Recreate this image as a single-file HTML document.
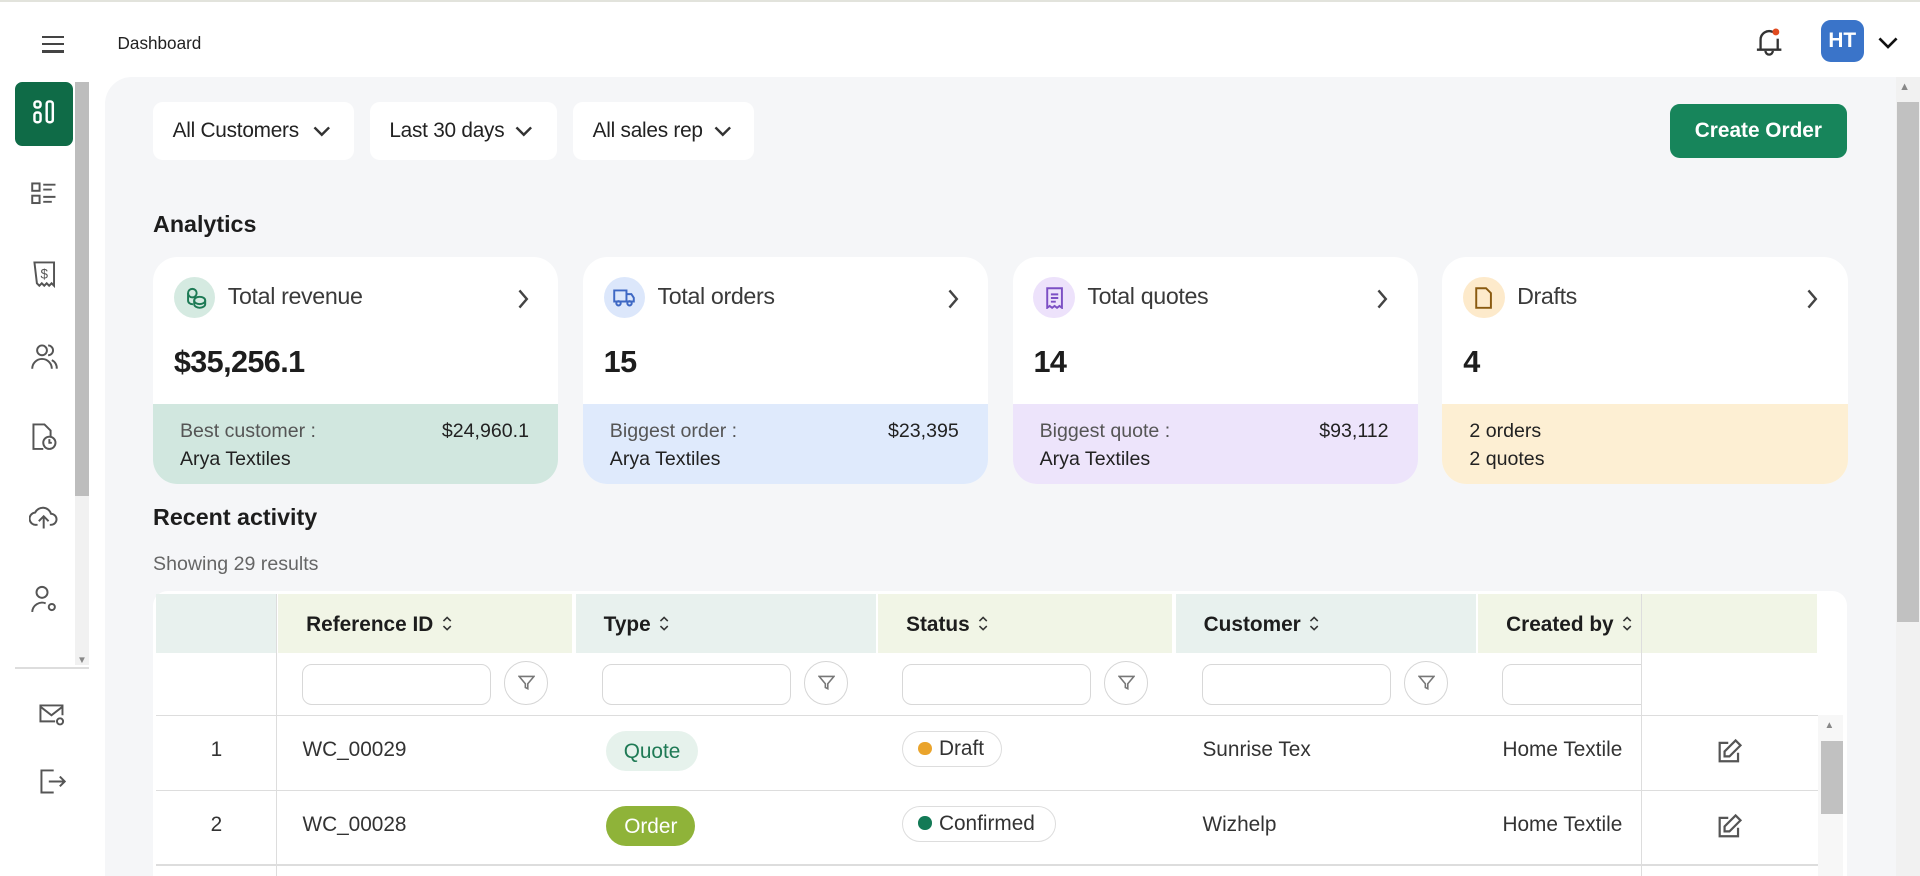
<!DOCTYPE html>
<html><head><meta charset="utf-8"><style>
html,body{margin:0;padding:0;}
body{width:1920px;height:876px;overflow:hidden;background:#fff;font-family:"Liberation Sans",sans-serif;color:#1d1d1d;}
#r{position:relative;width:1568px;height:715px;zoom:1.22449;overflow:hidden;background:#fff;}
.a{position:absolute;}
.t{position:absolute;white-space:nowrap;}
.filter{position:absolute;top:83px;height:48px;background:#fff;border-radius:8px;font-size:17px;line-height:48px;padding-left:16px;box-sizing:border-box;color:#222;letter-spacing:-0.2px}
.filter svg{position:absolute;top:19px;}
.card{position:absolute;top:210px;width:331px;height:185px;border-radius:20px;overflow:hidden;background:#fff;}
.card .bot{position:absolute;left:0;right:0;top:120px;bottom:0;}
.card .ic{position:absolute;left:17px;top:16px;width:34px;height:34px;border-radius:50%;}
.card .ti{position:absolute;left:61px;top:21px;font-size:19px;color:#3a3a3a;letter-spacing:-0.3px}
.card .val{position:absolute;left:17px;top:72px;font-size:25px;font-weight:bold;letter-spacing:-0.5px}
.card .chev{position:absolute;right:24px;top:25px;}
.card .l1{position:absolute;left:22px;top:133px;font-size:16px;color:#555;}
.card .l2{position:absolute;left:22px;top:156px;font-size:16px;color:#222;}
.card .r1{position:absolute;right:24px;top:133px;font-size:16px;color:#222;}
.hd{position:absolute;top:485px;height:48px;font-size:17px;font-weight:bold;line-height:50px;white-space:nowrap}
.hd svg{vertical-align:-1px;margin-left:6px}
.inp{position:absolute;top:542px;width:152px;height:32px;border:1px solid #d8d8d8;border-radius:8px;background:#fff;}
.fb{position:absolute;top:540px;width:34px;height:34px;border:1px solid #d5d5d5;border-radius:50%;background:#fff;}
.fb svg{position:absolute;left:10px;top:10px;}
.cell{position:absolute;font-size:17px;color:#333;}
</style></head><body><div id="r">
<div class="a" style="left:0;top:0;width:1568px;height:2px;background:#e2e3dc"></div>
<div class="a" style="left:34px;top:29px;width:18px;height:2px;background:#444"></div>
<div class="a" style="left:34px;top:35px;width:18px;height:2px;background:#444"></div>
<div class="a" style="left:34px;top:41px;width:18px;height:2px;background:#444"></div>
<div class="t" style="left:96px;top:27px;font-size:14px;color:#222">Dashboard</div>
<svg class="a" style="left:1431px;top:20px" width="28" height="28" viewBox="0 0 28 28" fill="none" stroke="#333" stroke-width="1.9"><path d="M7 20v-7a7 7 0 0 1 10-6.5"/><path d="M21 12v8"/><path d="M4 21h20"/><path d="M11 22a3 3 0 0 0 6 0"/><circle cx="19.5" cy="6.5" r="2.8" fill="#e04a1f" stroke="none"/></svg>
<div class="a" style="left:1487px;top:16px;width:35px;height:35px;border-radius:8px;background:#3a74c9;color:#fff;font-weight:bold;font-size:17px;line-height:35px;text-align:center">HT</div>
<svg class="a" style="left:1533px;top:29px" width="18" height="12" viewBox="0 0 18 12" fill="none" stroke="#111" stroke-width="2.2"><path d="M2 2l7 7 7-7"/></svg>
<div class="a" style="left:12px;top:67px;width:48px;height:52px;border-radius:6px;background:#0f6b47"></div>
<svg class="a" style="left:26px;top:81px" width="20" height="22" viewBox="0 0 20 22" fill="none" stroke="#fff" stroke-width="2"><rect x="2" y="2" width="5" height="5" rx="2"/><rect x="2" y="11" width="5" height="8" rx="2"/><rect x="12" y="2" width="5" height="17" rx="2"/></svg>
<div class="a" style="left:61px;top:67px;width:12px;height:338px;background:#bdbdbd"></div>
<div class="a" style="left:61px;top:405px;width:12px;height:138px;background:#f1f1f1"></div>
<svg class="a" style="left:25px;top:148px" width="22" height="20" viewBox="0 0 22 20" fill="none" stroke="#555" stroke-width="1.6"><rect x="1" y="2" width="6" height="6"/><rect x="1" y="12" width="6" height="6"/><path d="M10 3h10M10 7h7M10 13h10M10 17h7"/></svg>
<svg class="a" style="left:26px;top:212px" width="20" height="24" viewBox="0 0 20 24" fill="none" stroke="#555" stroke-width="1.6"><path d="M2 2h16v19l-2-2-2 2-2-2-2 2-2-2-2 2-2-2z"/><text x="10" y="15" font-size="11" text-anchor="middle" fill="#555" stroke="none" font-family="Liberation Sans">$</text></svg>
<svg class="a" style="left:25px;top:280px" width="22" height="22" viewBox="0 0 22 22" fill="none" stroke="#555" stroke-width="1.6"><circle cx="9" cy="6" r="4"/><path d="M1 21a8 8 0 0 1 16 0"/><path d="M14 2a4 4 0 0 1 0 8M17 14a7 7 0 0 1 4 7"/></svg>
<svg class="a" style="left:25px;top:345px" width="22" height="24" viewBox="0 0 22 24" fill="none" stroke="#555" stroke-width="1.6"><path d="M10 22H2V2h9l5 5v5"/><circle cx="15" cy="17" r="5"/><path d="M15 14v3h2"/></svg>
<svg class="a" style="left:24px;top:412px" width="24" height="22" viewBox="0 0 24 22" fill="none" stroke="#555" stroke-width="1.6"><path d="M7 17H6a5 5 0 0 1-1-10 7 7 0 0 1 13 1 4 4 0 0 1 0 9h-1"/><path d="M12 20v-9M8 14l4-4 4 4"/></svg>
<svg class="a" style="left:25px;top:478px" width="22" height="24" viewBox="0 0 22 24" fill="none" stroke="#555" stroke-width="1.6"><circle cx="9" cy="6" r="4.5"/><path d="M1 22a8 8 0 0 1 11-7"/><circle cx="17" cy="18" r="2.5"/></svg>
<div class="a" style="left:63px;top:535px;font-size:8px;color:#888">▼</div>
<div class="a" style="left:12px;top:545px;width:61px;height:1px;background:#ddd"></div>
<svg class="a" style="left:31px;top:574px" width="24" height="20" viewBox="0 0 24 20" fill="none" stroke="#555" stroke-width="1.6"><path d="M14 15H2V2h18v8"/><path d="M2 3l9 7 9-7"/><circle cx="18" cy="15" r="2.5"/></svg>
<svg class="a" style="left:32px;top:627px" width="22" height="22" viewBox="0 0 22 22" fill="none" stroke="#555" stroke-width="1.6"><path d="M12 2H2v18h10"/><path d="M8 11h13M17 7l4 4-4 4"/></svg>
<div class="a" style="left:86px;top:63px;width:1462px;height:652px;background:#f5f6f8;border-top-left-radius:22px"></div>
<div class="a" style="left:1548px;top:63px;width:20px;height:652px;background:#f1f1f1"></div>
<div class="a" style="left:1551px;top:66px;font-size:9px;color:#888">▲</div>
<div class="a" style="left:1549px;top:83px;width:18px;height:425px;background:#c1c1c1"></div>
<div class="filter" style="left:125px;width:164px">All Customers<svg style="left:130px" width="16" height="10" viewBox="0 0 16 10" fill="none" stroke="#333" stroke-width="2"><path d="M2 2l6 6 6-6"/></svg></div>
<div class="filter" style="left:302px;width:153px">Last 30 days<svg style="left:118px" width="16" height="10" viewBox="0 0 16 10" fill="none" stroke="#333" stroke-width="2"><path d="M2 2l6 6 6-6"/></svg></div>
<div class="filter" style="left:468px;width:148px">All sales rep<svg style="left:114px" width="16" height="10" viewBox="0 0 16 10" fill="none" stroke="#333" stroke-width="2"><path d="M2 2l6 6 6-6"/></svg></div>
<div class="a" style="left:1364px;top:85px;width:144px;height:44px;border-radius:8px;background:#17855b;color:#fff;font-weight:bold;font-size:17px;line-height:44px;text-align:center">Create Order</div>
<div class="t" style="left:125px;top:172px;font-size:19px;font-weight:bold">Analytics</div>
<div class="card" style="left:125px"><div class="bot" style="background:#d1e7df"></div><div class="ic" style="background:#d5eae1"></div>
<svg class="a" style="left:26px;top:24px" width="18" height="18" viewBox="0 0 18 18" fill="none" stroke="#1d7a55" stroke-width="1.6"><circle cx="6" cy="5" r="3.5"/><path d="M2.5 5v6a3.5 3 0 0 0 4 3"/><ellipse cx="12" cy="11" rx="4.5" ry="3"/><path d="M7.5 11v3a4.5 3 0 0 0 9 0v-3"/></svg>
<div class="ti">Total revenue</div><svg class="chev" width="10" height="18" viewBox="0 0 10 18" fill="none" stroke="#444" stroke-width="2"><path d="M2 2l6 7-6 7"/></svg>
<div class="val">$35,256.1</div><div class="l1">Best customer :</div><div class="r1">$24,960.1</div><div class="l2">Arya Textiles</div></div>
<div class="card" style="left:476px"><div class="bot" style="background:#dfeafc"></div><div class="ic" style="background:#dce7fb"></div>
<svg class="a" style="left:25px;top:25px" width="18" height="16" viewBox="0 0 18 16" fill="none" stroke="#3e68c4" stroke-width="1.6"><path d="M1 2h10v9H1zM11 5h4l2 3v3h-6"/><circle cx="4.5" cy="12.5" r="1.8"/><circle cx="13.5" cy="12.5" r="1.8"/></svg>
<div class="ti">Total orders</div><svg class="chev" width="10" height="18" viewBox="0 0 10 18" fill="none" stroke="#444" stroke-width="2"><path d="M2 2l6 7-6 7"/></svg>
<div class="val">15</div><div class="l1">Biggest order :</div><div class="r1">$23,395</div><div class="l2">Arya Textiles</div></div>
<div class="card" style="left:827px"><div class="bot" style="background:#ede4fb"></div><div class="ic" style="background:#ede2fb"></div>
<svg class="a" style="left:27px;top:24px" width="14" height="18" viewBox="0 0 14 18" fill="none" stroke="#7c4fc4" stroke-width="1.6"><path d="M1 1h12v16l-2-1.5-2 1.5-2-1.5-2 1.5-2-1.5-2 1.5z"/><path d="M4 6h6M4 9h6M4 12h4"/></svg>
<div class="ti">Total quotes</div><svg class="chev" width="10" height="18" viewBox="0 0 10 18" fill="none" stroke="#444" stroke-width="2"><path d="M2 2l6 7-6 7"/></svg>
<div class="val">14</div><div class="l1">Biggest quote :</div><div class="r1">$93,112</div><div class="l2">Arya Textiles</div></div>
<div class="card" style="left:1178px"><div class="bot" style="background:#fdefd3"></div><div class="ic" style="background:#fdeacb"></div>
<svg class="a" style="left:27px;top:24px" width="14" height="18" viewBox="0 0 14 18" fill="none" stroke="#8a5a10" stroke-width="1.6"><path d="M1 1h8l4 4v12H1z"/></svg>
<div class="ti">Drafts</div><svg class="chev" width="10" height="18" viewBox="0 0 10 18" fill="none" stroke="#444" stroke-width="2"><path d="M2 2l6 7-6 7"/></svg>
<div class="val">4</div><div class="l1" style="color:#222">2 orders</div><div class="l2">2 quotes</div></div>
<div class="t" style="left:125px;top:412px;font-size:19px;font-weight:bold">Recent activity</div>
<div class="t" style="left:125px;top:452px;font-size:16px;color:#666">Showing 29 results</div>
<div class="a" style="left:125px;top:483px;width:1383px;height:232px;background:#fff;border-radius:12px 12px 0 0"></div>
<div class="a" style="left:127px;top:485px;width:98px;height:48px;background:#e8f1ee"></div>
<div class="hd" style="left:227px;width:240px;background:#f1f5e6;padding-left:23px;box-sizing:border-box">Reference ID<svg width="10" height="14" viewBox="0 0 10 14" fill="none" stroke="#333" stroke-width="1.3"><path d="M2 5l3-3 3 3M2 9l3 3 3-3"/></svg></div>
<div class="hd" style="left:470px;width:245px;background:#e8f1ee;padding-left:23px;box-sizing:border-box">Type<svg width="10" height="14" viewBox="0 0 10 14" fill="none" stroke="#333" stroke-width="1.3"><path d="M2 5l3-3 3 3M2 9l3 3 3-3"/></svg></div>
<div class="hd" style="left:717px;width:240px;background:#f1f5e6;padding-left:23px;box-sizing:border-box">Status<svg width="10" height="14" viewBox="0 0 10 14" fill="none" stroke="#333" stroke-width="1.3"><path d="M2 5l3-3 3 3M2 9l3 3 3-3"/></svg></div>
<div class="hd" style="left:960px;width:245px;background:#e8f1ee;padding-left:23px;box-sizing:border-box">Customer<svg width="10" height="14" viewBox="0 0 10 14" fill="none" stroke="#333" stroke-width="1.3"><path d="M2 5l3-3 3 3M2 9l3 3 3-3"/></svg></div>
<div class="hd" style="left:1207px;width:133px;background:#f1f5e6;padding-left:23px;box-sizing:border-box;overflow:hidden">Created by<svg width="10" height="14" viewBox="0 0 10 14" fill="none" stroke="#333" stroke-width="1.3"><path d="M2 5l3-3 3 3M2 9l3 3 3-3"/></svg></div>
<div class="hd" style="left:1340px;width:144px;background:#f1f5e6"></div>
<div class="inp" style="left:247px"></div><div class="fb" style="left:412px"><svg width="14" height="14" viewBox="0 0 14 14" fill="none" stroke="#777" stroke-width="1.3"><path d="M1 2h12L8 8v4l-2-1V8z"/></svg></div>
<div class="inp" style="left:492px"></div><div class="fb" style="left:657px"><svg width="14" height="14" viewBox="0 0 14 14" fill="none" stroke="#777" stroke-width="1.3"><path d="M1 2h12L8 8v4l-2-1V8z"/></svg></div>
<div class="inp" style="left:737px"></div><div class="fb" style="left:902px"><svg width="14" height="14" viewBox="0 0 14 14" fill="none" stroke="#777" stroke-width="1.3"><path d="M1 2h12L8 8v4l-2-1V8z"/></svg></div>
<div class="inp" style="left:982px"></div><div class="fb" style="left:1147px"><svg width="14" height="14" viewBox="0 0 14 14" fill="none" stroke="#777" stroke-width="1.3"><path d="M1 2h12L8 8v4l-2-1V8z"/></svg></div>
<div class="inp" style="left:1227px;width:113px;border-right:none;border-radius:8px 0 0 8px"></div>
<div class="a" style="left:225px;top:485px;width:1px;height:230px;background:#ddd"></div>
<div class="a" style="left:1340px;top:485px;width:1px;height:230px;background:#ddd"></div>
<div class="a" style="left:127px;top:584px;width:1358px;height:1px;background:#ddd"></div>
<div class="a" style="left:127px;top:645px;width:1358px;height:1px;background:#ddd"></div>
<div class="a" style="left:127px;top:706px;width:1358px;height:1px;background:#ddd"></div>
<div class="a" style="left:1485px;top:584px;width:20px;height:131px;background:#f7f7f7"></div>
<div class="a" style="left:1490px;top:588px;font-size:8px;color:#888">▲</div>
<div class="a" style="left:1487px;top:605px;width:18px;height:60px;background:#c1c1c1"></div>
<div class="cell" style="left:172px;top:603px">1</div>
<div class="cell" style="left:172px;top:664px">2</div>
<div class="cell" style="left:247px;top:603px">WC_00029</div>
<div class="cell" style="left:247px;top:664px">WC_00028</div>
<div class="a" style="left:495px;top:597px;width:75px;height:33px;border-radius:17px;background:#e6f2ec;color:#1f7a55;font-size:17px;line-height:34px;text-align:center">Quote</div>
<div class="a" style="left:495px;top:658px;width:73px;height:33px;border-radius:17px;background:#8fb339;color:#fff;font-size:17px;line-height:34px;text-align:center">Order</div>
<div class="a" style="left:737px;top:597px;width:80px;height:28px;border:1px solid #ddd;border-radius:15px;font-size:17px;line-height:28px;color:#333"><span style="display:inline-block;width:11px;height:11px;border-radius:50%;background:#eaa42c;margin:0 6px 0 12px"></span>Draft</div>
<div class="a" style="left:737px;top:658px;width:124px;height:28px;border:1px solid #ddd;border-radius:15px;font-size:17px;line-height:28px;color:#333"><span style="display:inline-block;width:11px;height:11px;border-radius:50%;background:#137a56;margin:0 6px 0 12px"></span>Confirmed</div>
<div class="cell" style="left:982px;top:603px">Sunrise Tex</div>
<div class="cell" style="left:982px;top:664px">Wizhelp</div>
<div class="cell" style="left:1227px;top:603px">Home Textile</div>
<div class="cell" style="left:1227px;top:664px">Home Textile</div>
<svg class="a" style="left:1401px;top:603px" width="22" height="22" viewBox="0 0 22 22" fill="none" stroke="#555" stroke-width="1.8"><path d="M10 4H3v15h15v-7"/><path d="M16 2l4 4-9 9H7v-4z"/></svg>
<svg class="a" style="left:1401px;top:664px" width="22" height="22" viewBox="0 0 22 22" fill="none" stroke="#555" stroke-width="1.8"><path d="M10 4H3v15h15v-7"/><path d="M16 2l4 4-9 9H7v-4z"/></svg>
</div></body></html>
